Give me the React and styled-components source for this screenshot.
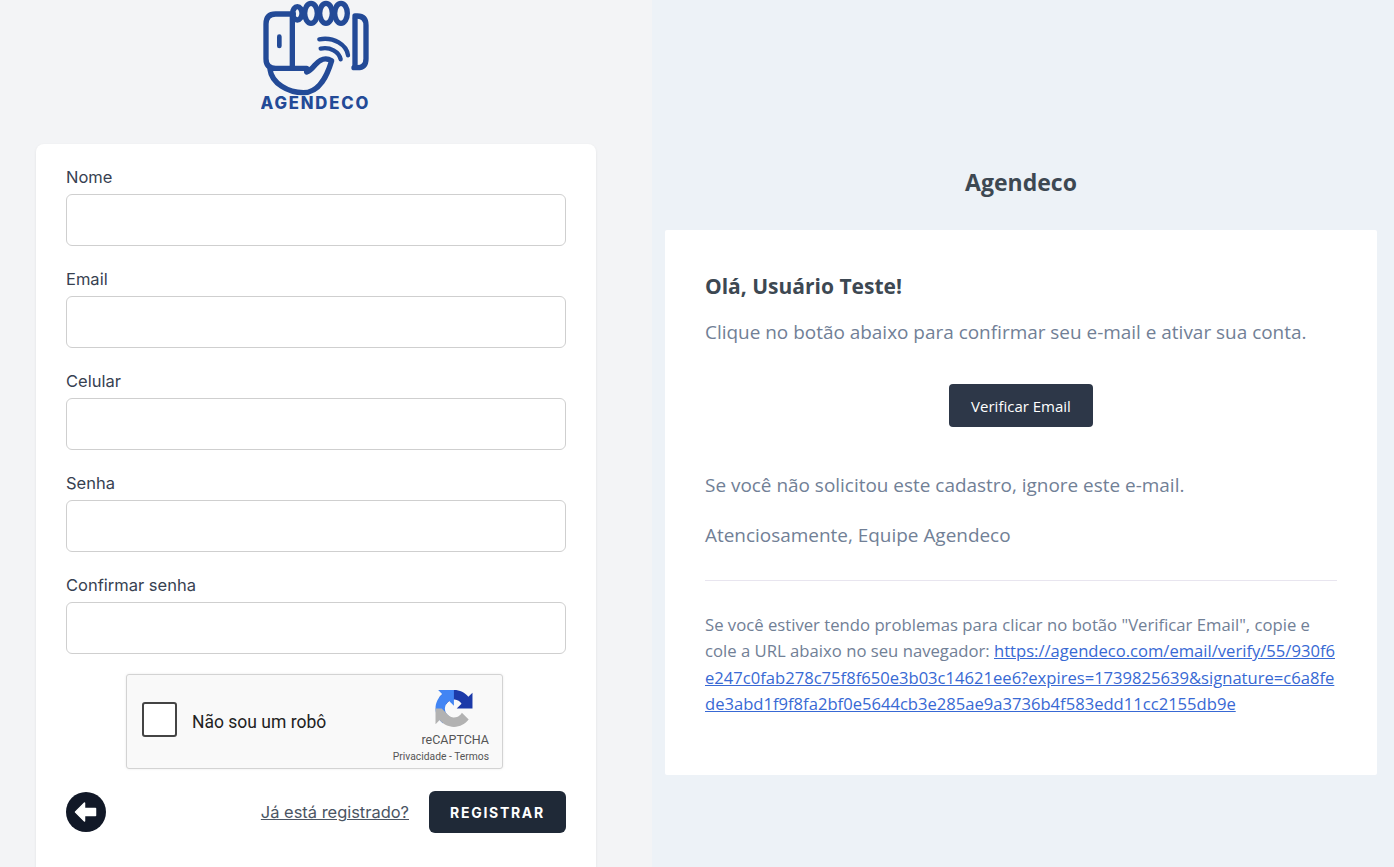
import React from 'react';
import styled, { createGlobalStyle } from 'styled-components';

const Global = createGlobalStyle`
  html, body { margin: 0; padding: 0; height: 867px; overflow: hidden; }
  * { box-sizing: border-box; }
`;
const Page = styled.div`
  display: grid; grid-template-columns: 652px 742px; width: 1394px; height: 867px; overflow: hidden;
`;
const LeftPane = styled.div`
  background: #f3f4f6; display: flex; flex-direction: column; align-items: flex-start;
  padding: 0 56px 0 36px; font-family: Inter, "Liberation Sans", sans-serif;
`;
const LogoLink = styled.div`
  align-self: center; width: 110px; height: 120px; margin: 0 0 24px 0; line-height: 0;
`;
const Card = styled.form`
  width: 560px; background: #fff; border-radius: 8px 8px 0 0; padding: 22px 30px 0;
  box-shadow: 0 1px 3px rgba(0,0,0,.08); height: 723px;
`;
const Field = styled.div`
  height: 102px;
`;
const Label = styled.label`
  display: block; font-size: 16.5px; line-height: 22px; color: #374151; margin-bottom: 6px; font-weight: 400;
`;
const Input = styled.input`
  display: block; width: 500px; height: 52px; border: 1px solid #cfcfcf; border-radius: 6px; background: #fff;
`;
const Captcha = styled.div`
  margin: -2px 0 0 60px; width: 377px; height: 95px; border: 1px solid #d3d3d3; border-radius: 3px;
  background: #f9f9f9; box-shadow: 0 0 3px rgba(0,0,0,.08); display: flex; align-items: center;
  padding: 0 13px 0 15px; font-family: Roboto, "Liberation Sans", sans-serif;
`;
const CaptchaBox = styled.div`
  width: 35px; height: 35px; border: 2px solid #444; border-radius: 3px; background: #fff; flex: none; margin-bottom: 5px;
`;
const CaptchaLabel = styled.span`
  font-size: 17.5px; color: #222; margin-left: 15px; flex: 1;
`;
const CaptchaBrand = styled.div`
  display: flex; flex-direction: column; align-items: flex-end; align-self: stretch; padding-top: 15px; line-height: 0;
`;
const CaptchaIcon = styled.div`
  margin-right: 16px; line-height: 0;
`;
const CaptchaName = styled.span`
  font-size: 12.5px; color: #555; line-height: 14px; margin-top: 6px;
`;
const CaptchaLinks = styled.span`
  font-size: 10.3px; color: #555; line-height: 12px; margin-top: 4px; white-space: nowrap;
`;
const Actions = styled.div`
  display: flex; align-items: center; margin-top: 22px; height: 42px;
`;
const BackButton = styled.div`
  width: 40px; height: 40px; line-height: 0; margin-right: auto;
`;
const LoginLink = styled.a`
  font-size: 16.45px; color: #4b5563; text-decoration: underline; margin-right: 20px;
`;
const Submit = styled.button`
  width: 137px; height: 42px; border: 0; border-radius: 6px; background: #1f2937; color: #fff;
  font-family: inherit; font-size: 14px; font-weight: 700; letter-spacing: 1.7px;
`;
const RightPane = styled.div`
  background: #edf2f7; display: flex; flex-direction: column; align-items: flex-start; padding-left: 13px;
  font-family: "Open Sans", "Noto Sans", sans-serif;
`;
const MailTitle = styled.h1`
  width: 712px; margin: 0; padding-top: 167px; height: 230px; text-align: center; font-size: 23px; line-height: 30px;
  font-weight: 700; color: #3d4852;
`;
const MailBody = styled.div`
  width: 712px; height: 545px; background: #fff; border-radius: 2px; padding: 40px;
`;
const Greeting = styled.h2`
  margin: 0; font-size: 21px; line-height: 32px; font-weight: 700; color: #3d4852;
`;
const Para = styled.p`
  margin: ${(p) => p.$top || 18}px 0 0; font-size: 18.95px; line-height: 24px; color: #718096;
`;
const ButtonRow = styled.div`
  display: flex; justify-content: center; margin: 40px 0 46px;
`;
const VerifyButton = styled.a`
  width: 144px; height: 43px; display: flex; align-items: center; justify-content: center; background: #2d3748;
  border-radius: 4px; color: #fff; font-size: 15px;
`;
const Divider = styled.hr`
  border: 0; border-top: 1px solid #e8e5ef; margin: 33px 0 31px;
`;
const Sub = styled.p`
  margin: 0; font-size: 16.7px; line-height: 26.4px; color: #718096;
`;
const SubLink = styled.a`
  color: #3869d4; text-decoration: underline; word-break: break-all; font-size: 16.6px;
`;

const Logo = () => (
  <svg width="110" height="120" viewBox="63 0 330 360" fill="none" stroke="#234a97" strokeWidth="16" strokeLinecap="round" strokeLinejoin="round">
    <path d="M160 42H107Q78 42 78 72V176Q78 205 107 205H200" />
    <path d="M157 48V205" />
    <path d="M345 48H352Q378 48 378 76V176Q378 203 352 203H342" />
    <path d="M345 55V200" />
    <path d="M118 110V138" strokeWidth="14" />
    <ellipse cx="172" cy="40" rx="14" ry="20" />
    <ellipse cx="213" cy="40" rx="19" ry="30" />
    <ellipse cx="258" cy="40" rx="19" ry="30" />
    <ellipse cx="303" cy="40" rx="19" ry="30" />
    <path d="M90 208C95 250 145 278 190 278C240 278 262 225 275 182C255 170 240 178 225 195C215 207 208 213 200 216" />
    <path d="M238 118C282 110 320 135 324 166M242 146C270 140 297 155 302 178" strokeWidth="13" />
    <text x="226" y="328" textAnchor="middle" fill="#234a97" stroke="none" fontFamily="Inter, sans-serif" fontSize="50" fontWeight="800" letterSpacing="5.500">AGENDECO</text>
  </svg>
);

const Recaptcha = () => (
  <svg width="38" height="37" viewBox="0 0 64 64">
    <path d="M64 31.955l-.033-1.37V4.687l-7.16 7.16C50.948 4.674 42.033.093 32.05.093c-10.4 0-19.622 4.96-25.458 12.64l11.736 11.86a15.55 15.55 0 0 1 4.754-5.334c2.05-1.6 4.952-2.906 8.968-2.906.485 0 .86.057 1.135.163 4.976.393 9.288 3.14 11.828 7.124l-8.307 8.307 26.3.001" fill="#1c3aa9" />
    <path d="M31.862 0l-1.37.033H4.594l7.16 7.16C4.58 13.052 0 21.967 0 31.95c0 10.4 4.96 19.622 12.64 25.458l11.86-11.736a15.55 15.55 0 0 1-5.334-4.754c-1.6-2.05-2.906-4.952-2.906-8.968 0-.485.057-.86.163-1.135.393-4.976 3.14-9.288 7.124-11.828l8.307 8.307L31.862 0" fill="#4285f4" />
    <path d="M0 31.95l.033 1.37v25.898l7.16-7.16C13.052 59.23 21.967 63.81 31.95 63.81c10.4 0 19.622-4.96 25.458-12.64L45.672 39.31a15.55 15.55 0 0 1-4.754 5.334c-2.05 1.6-4.952 2.906-8.968 2.906-.485 0-.86-.057-1.135-.163-4.976-.393-9.288-3.14-11.828-7.124l-8.307-8.307L0 31.95" fill="#b2b2b2" />
  </svg>
);

const BackIcon = () => (
  <svg width="40" height="40" viewBox="0 0 40 40">
    <circle cx="20" cy="20" r="20" fill="#111827" />
    <path d="M9.500 20L18.500 11V16.500H29.500V23.500H18.500V29Z" fill="#fff" stroke="#fff" strokeWidth="1.500" strokeLinejoin="round" />
  </svg>
);

const fields = ['Nome', 'Email', 'Celular', 'Senha', 'Confirmar senha'];

export default function App() {
  return (
    <Page>
      <Global />
      <LeftPane>
        <LogoLink><Logo /></LogoLink>
        <Card>
          {fields.map((f) => (
            <Field key={f}>
              <Label>{f}</Label>
              <Input />
            </Field>
          ))}
          <Captcha>
            <CaptchaBox />
            <CaptchaLabel>Não sou um robô</CaptchaLabel>
            <CaptchaBrand>
              <CaptchaIcon><Recaptcha /></CaptchaIcon>
              <CaptchaName>reCAPTCHA</CaptchaName>
              <CaptchaLinks>Privacidade - Termos</CaptchaLinks>
            </CaptchaBrand>
          </Captcha>
          <Actions>
            <BackButton><BackIcon /></BackButton>
            <LoginLink>Já está registrado?</LoginLink>
            <Submit type="button">REGISTRAR</Submit>
          </Actions>
        </Card>
      </LeftPane>
      <RightPane>
        <MailTitle>Agendeco</MailTitle>
        <MailBody>
          <Greeting>Olá, Usuário Teste!</Greeting>
          <Para>Clique no botão abaixo para confirmar seu e-mail e ativar sua conta.</Para>
          <ButtonRow><VerifyButton>Verificar Email</VerifyButton></ButtonRow>
          <Para>Se você não solicitou este cadastro, ignore este e-mail.</Para>
          <Para $top={26}>Atenciosamente, Equipe Agendeco</Para>
          <Divider />
          <Sub>Se você estiver tendo problemas para clicar no botão "Verificar Email", copie e cole a URL abaixo no seu navegador: <SubLink>https://agendeco.com/email/verify/55/930f6e247c0fab278c75f8f650e3b03c14621ee6?expires=1739825639&signature=c6a8fede3abd1f9f8fa2bf0e5644cb3e285ae9a3736b4f583edd11cc2155db9e</SubLink></Sub>
        </MailBody>
      </RightPane>
    </Page>
  );
}
